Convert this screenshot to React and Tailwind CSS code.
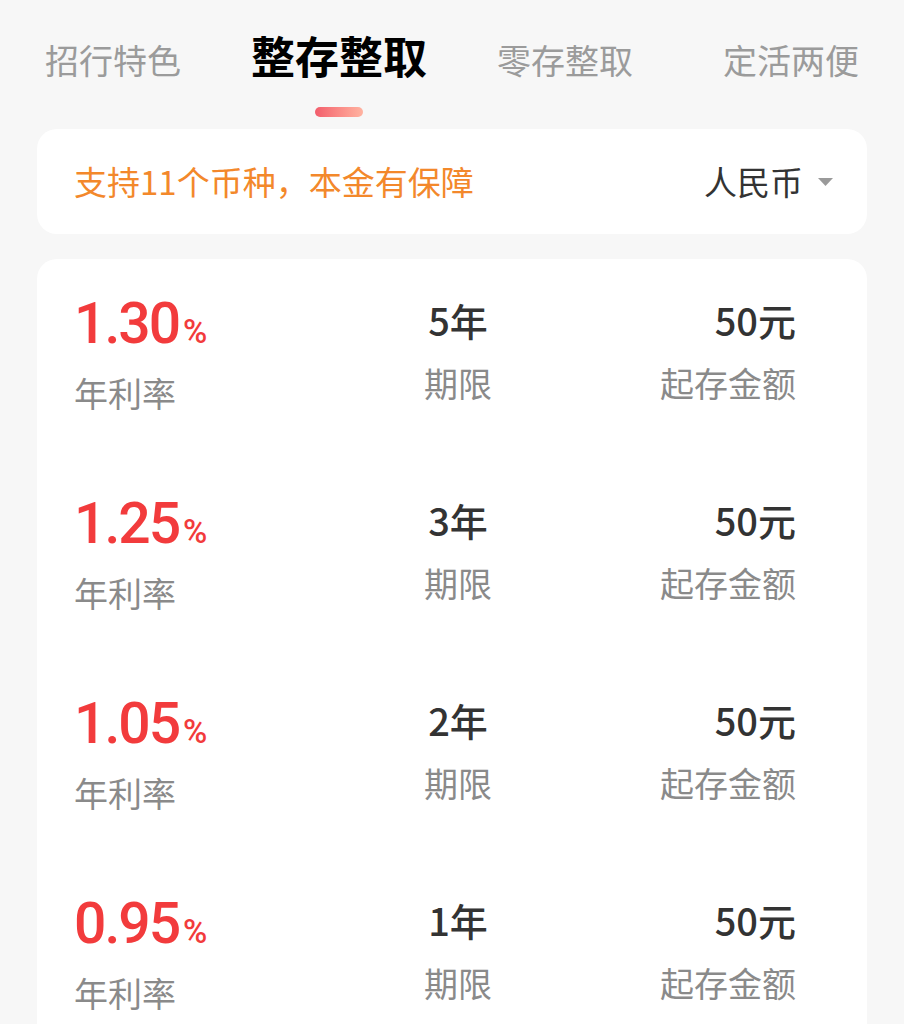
import React from "react";

const tabs = ["招行特色", "整存整取", "零存整取", "定活两便"];

const products = [
  { rate: "1.30", term: "5年", min: "50元" },
  { rate: "1.25", term: "3年", min: "50元" },
  { rate: "1.05", term: "2年", min: "50元" },
  { rate: "0.95", term: "1年", min: "50元" },
];

const cjk = { fontFamily: '"Noto Sans CJK SC", "Noto Sans", sans-serif' };
const num = { fontFamily: 'Roboto, "Noto Sans CJK SC", sans-serif' };

const ProductRow = ({ rate, term, min }) => {
  return (
    <div className="flex h-[200px] items-start">
      {/* rate */}
      <div className="w-[284px] pt-[37px]">
        <div className="flex items-baseline leading-[56px] text-[#f23b3c]" style={num}>
          <span className="text-[57px] font-medium tracking-[-2px]">{rate}</span>
          <span className="ml-[4px] text-[33px] font-medium">%</span>
        </div>
        <div className="mt-[16px] text-[34px] leading-[34px] text-[#8a8a8a]">年利率</div>
      </div>

      {/* term */}
      <div className="w-[200px] pt-[42px] text-center">
        <div className="text-[38px] font-medium leading-[38px] text-[#333]">{term}</div>
        <div className="mt-[27px] text-[34px] leading-[34px] text-[#8a8a8a]">期限</div>
      </div>

      {/* min amount */}
      <div className="flex-1 pt-[42px] text-right">
        <div className="text-[38px] font-medium leading-[38px] text-[#333]">{min}</div>
        <div className="mt-[27px] text-[34px] leading-[34px] text-[#8a8a8a]">起存金额</div>
      </div>
    </div>
  );
};

export default function App() {
  const active = 1;

  return (
    <div className="min-h-screen w-full bg-[#f7f7f7]" style={cjk}>
      {/* tabs */}
      <div className="pt-[33px]">
        <div className="grid grid-cols-4 items-end">
          {tabs.map((t, i) => (
            <div
              key={t}
              className={
                i === active
                  ? "text-center text-[44px] font-bold leading-[44px] text-black"
                  : "text-center text-[34px] leading-[34px] text-[#9b9b9b]"
              }
            >
              {t}
            </div>
          ))}
        </div>
        <div className="mt-[30px] grid grid-cols-4">
          <div className="col-start-2 flex justify-center">
            <div className="h-[10px] w-[48px] rounded-full bg-gradient-to-r from-[#f25d6c] to-[#ffb3a1]" />
          </div>
        </div>
      </div>

      {/* currency card */}
      <div className="mx-[37px] mt-[12px] flex h-[105px] items-center justify-between rounded-[20px] bg-white pl-[37px] pr-[34px]">
        <span className="text-[33px] leading-[33px] text-[#f3882b]">支持11个币种，本金有保障</span>
        <div className="flex items-center">
          <span className="text-[33px] leading-[33px] text-[#333]">人民币</span>
          <svg width="15" height="8" viewBox="0 0 15 8" className="ml-[15px]">
            <path d="M0 0 L15 0 L7.5 8 Z" fill="#9a9a9a" />
          </svg>
        </div>
      </div>

      {/* product list */}
      <div className="mx-[37px] mt-[25px] rounded-[20px] bg-white pl-[37px] pr-[71px]">
        {products.map((p) => (
          <ProductRow key={p.rate} {...p} />
        ))}
      </div>
    </div>
  );
}
